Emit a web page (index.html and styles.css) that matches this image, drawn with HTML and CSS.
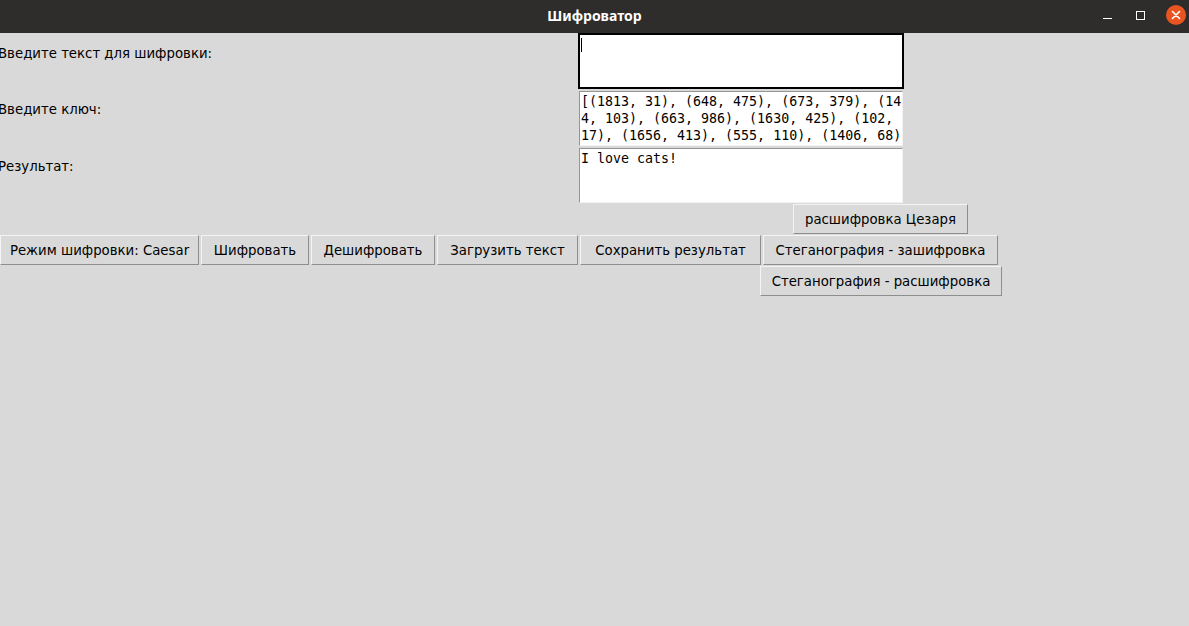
FILE: index.html
```html
<!DOCTYPE html>
<html lang="ru">
<head>
<meta charset="utf-8">
<title>Шифроватор</title>
<link rel="stylesheet" href="styles.css">
</head>
<body>
<div class="titlebar">
  <div class="title">Шифроватор</div>
  <div class="controls">
    <span class="ctl-min"></span>
    <span class="ctl-max"></span>
    <span class="ctl-close">
      <svg width="20" height="20" viewBox="0 0 20 20"><path d="M6.5 6.5 L13.5 13.5 M13.5 6.5 L6.5 13.5" stroke="#fff" stroke-width="1.6" stroke-linecap="round"/></svg>
    </span>
  </div>
</div>
<div class="app">
  <div class="row">
    <div class="label">Введите текст для шифровки:</div>
    <div class="text focus"><span class="caret"></span></div>
  </div>
  <div class="row">
    <div class="label">Введите ключ:</div>
    <div class="text sunk">[(1813, 31), (648, 475), (673, 379), (14<br>4, 103), (663, 986), (1630, 425), (102,<br>17), (1656, 413), (555, 110), (1406, 68)</div>
  </div>
  <div class="row">
    <div class="label">Результат:</div>
    <div class="text sunk">I love cats!</div>
  </div>
  <div class="row-caesar">
    <button class="btn btn-caesar">расшифровка Цезаря</button>
  </div>
  <div class="row-buttons">
    <button class="btn w-mode">Режим шифровки: Caesar</button>
    <button class="btn w-enc">Шифровать</button>
    <button class="btn w-dec">Дешифровать</button>
    <button class="btn w-load">Загрузить текст</button>
    <button class="btn w-save">Сохранить результат</button>
    <button class="btn w-steg">Стеганография - зашифровка</button>
  </div>
  <div class="row-steg2">
    <button class="btn w-steg2">Стеганография - расшифровка</button>
  </div>
</div>
</body>
</html>
```
FILE: styles.css
```css
html, body {
  margin: 0;
  padding: 0;
  background: #d9d9d9;
  width: 1189px;
  height: 626px;
  overflow: hidden;
}
body {
  font-family: "DejaVu Sans", sans-serif;
  font-size: 13.3px;
  color: #000;
}
.titlebar {
  height: 33px;
  background: #2f2d2c;
  position: relative;
  display: flex;
  align-items: center;
  justify-content: center;
}
.title {
  color: #ffffff;
  font-family: "Noto Sans", "DejaVu Sans", sans-serif;
  font-weight: bold;
  font-size: 14px;
  margin-top: -2px;
}
.controls {
  position: absolute;
  right: 0;
  top: 0;
  height: 30px;
  display: flex;
  align-items: center;
}
.ctl-min {
  width: 9px;
  height: 1px;
  background: #ffffff;
  margin-right: 24px;
  margin-top: 6px;
}
.ctl-max {
  width: 7px;
  height: 7px;
  border: 1px solid #ffffff;
  margin-right: 21px;
}
.ctl-close {
  width: 20px;
  height: 20px;
  border-radius: 50%;
  background: #e95420;
  margin-right: 3px;
  display: flex;
}
.app {
  display: flex;
  flex-direction: column;
}
.row {
  display: flex;
  align-items: stretch;
}
.label {
  width: 580px;
  margin-left: -2px;
  flex: none;
  padding-top: 13px;
  box-sizing: border-box;
}
.text {
  background: #ffffff;
  font-family: "DejaVu Sans Mono", monospace;
  font-size: 13.3px;
  line-height: 17px;
  box-sizing: border-box;
  white-space: nowrap;
  overflow: hidden;
}
.text.focus {
  width: 326px;
  height: 56px;
  border: 2px solid #000;
  padding: 2px 1px;
}
.caret {
  display: inline-block;
  width: 1px;
  height: 14px;
  background: #000;
  margin-top: 1px;
}
.text.sunk {
  width: 324px;
  height: 55px;
  margin-left: 1px;
  margin-top: 2px;
  border: 1px solid;
  border-color: #959595 #f2f2f2 #f2f2f2 #959595;
  padding: 1px 1px;
}
.btn {
  font-family: "DejaVu Sans", sans-serif;
  font-size: 13.3px;
  color: #000;
  background: #d9d9d9;
  height: 30px;
  border: 1px solid;
  border-color: #f4f4f4 #8e8e8e #8e8e8e #f4f4f4;
  padding: 0;
  margin: 0;
  box-sizing: border-box;
  flex: none;
}
.row-caesar {
  display: flex;
  padding-left: 793px;
  margin-top: 1px;
}
.btn-caesar { width: 175px; }
.row-buttons {
  display: flex;
  gap: 2px;
  margin-top: 1px;
}
.w-mode { width: 199px; }
.w-enc { width: 108px; }
.w-dec { width: 124px; }
.w-load { width: 141px; }
.w-save { width: 181px; }
.w-steg { width: 235px; }
.row-steg2 {
  display: flex;
  padding-left: 760px;
  margin-top: 1px;
}
.w-steg2 { width: 242px; }
```
